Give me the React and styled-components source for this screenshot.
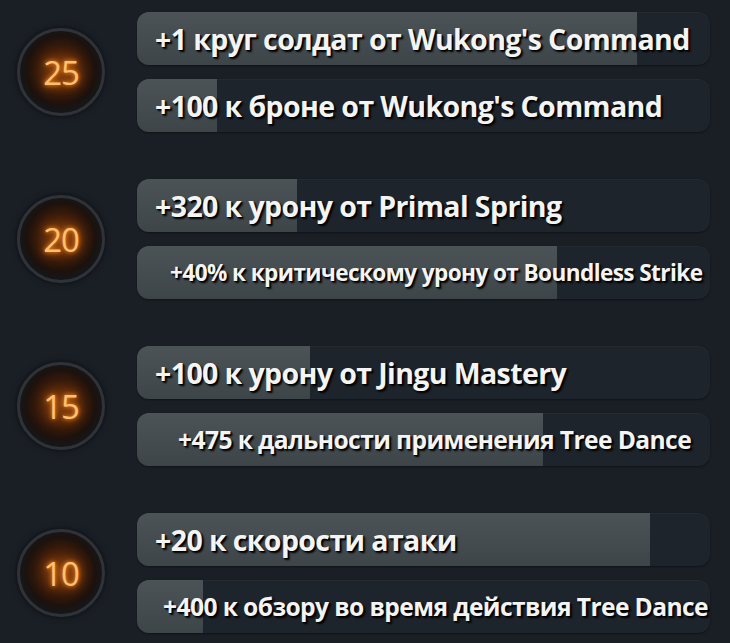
import React from 'react';
import styled, { createGlobalStyle } from 'styled-components';

const GlobalStyle = createGlobalStyle`
  html, body {
    margin: 0;
    padding: 0;
    background: #1a1f26;
  }
  body {
    font-family: "Open Sans", "Noto Sans", sans-serif;
  }
`;

const talents = [
  {
    level: 25,
    left: { text: "+1 круг солдат от Wukong's Command", size: 28.5, pad: 18, fill: 500 },
    right: { text: "+100 к броне от Wukong's Command", size: 28.5, pad: 18, fill: 80 },
  },
  {
    level: 20,
    left: { text: '+320 к урону от Primal Spring', size: 28.5, pad: 18, fill: 160 },
    right: { text: '+40% к критическому урону от Boundless Strike', size: 22.6, pad: 33, fill: 420 },
  },
  {
    level: 15,
    left: { text: '+100 к урону от Jingu Mastery', size: 28.5, pad: 18, fill: 173 },
    right: { text: '+475 к дальности применения Tree Dance', size: 24.6, pad: 41, fill: 406 },
  },
  {
    level: 10,
    left: { text: '+20 к скорости атаки', size: 28.5, pad: 18, fill: 513 },
    right: { text: '+400 к обзору во время действия Tree Dance', size: 24.6, pad: 26, fill: 66 },
  },
];

const Page = styled.div`
  display: flex;
  flex-direction: column;
  gap: 47px;
  padding: 12px 0 0 17px;
  width: 730px;
  height: 643px;
  box-sizing: border-box;
  overflow: hidden;
`;

const Tier = styled.div`
  display: flex;
  align-items: center;
  gap: 32px;
`;

const LevelBadge = styled.div`
  flex: none;
  width: 88px;
  height: 88px;
  box-sizing: border-box;
  border-radius: 50%;
  border: 3px solid #2f3338;
  background: radial-gradient(
    circle at 50% 48%,
    #6e3713 0%,
    #52270d 26%,
    #33190b 44%,
    #1c120d 58%,
    #14171b 72%
  );
  box-shadow: 0 0 6px rgba(0, 0, 0, 0.6);
  display: flex;
  align-items: center;
  justify-content: center;
`;

const LevelText = styled.span`
  font-family: "Open Sans", sans-serif;
  font-size: 33px;
  font-weight: 400;
  letter-spacing: -1px;
  color: #ffc070;
  text-shadow: 0 0 4px #ff8d24, 0 0 10px #d86a10, 0 0 16px #a04800;
`;

const Choices = styled.div`
  display: flex;
  flex-direction: column;
  gap: 14px;
  width: 573px;
`;

const Bar = styled.div`
  position: relative;
  height: 53px;
  border-radius: 12px;
  background: #1e242b;
  box-shadow: inset 0 1px 0 rgba(255, 255, 255, 0.03), 0 1px 2px rgba(0, 0, 0, 0.4);
  overflow: hidden;
  display: flex;
  align-items: center;
`;

const Fill = styled.div`
  position: absolute;
  left: 0;
  top: 0;
  bottom: 0;
  background: linear-gradient(180deg, #4b5356 0%, #434b4e 60%, #3e4548 100%);
`;

const Label = styled.span`
  position: relative;
  padding-left: ${p => p.$pad}px;
  font-family: "Open Sans", "Noto Sans", sans-serif;
  font-weight: 700;
  font-size: ${p => p.$size}px;
  letter-spacing: -0.6px;
  white-space: nowrap;
  color: #f4f4f2;
  text-shadow: 2px 2px 2px #000, 1px 1px 1px #000;
`;

function Choice({ item }) {
  return (
    <Bar>
      <Fill style={{ width: item.fill }} />
      <Label $pad={item.pad} $size={item.size}>{item.text}</Label>
    </Bar>
  );
}

export default function App() {
  return (
    <>
      <GlobalStyle />
      <Page>
        {talents.map(t => (
          <Tier key={t.level}>
            <LevelBadge>
              <LevelText>{t.level}</LevelText>
            </LevelBadge>
            <Choices>
              <Choice item={t.left} />
              <Choice item={t.right} />
            </Choices>
          </Tier>
        ))}
      </Page>
    </>
  );
}
